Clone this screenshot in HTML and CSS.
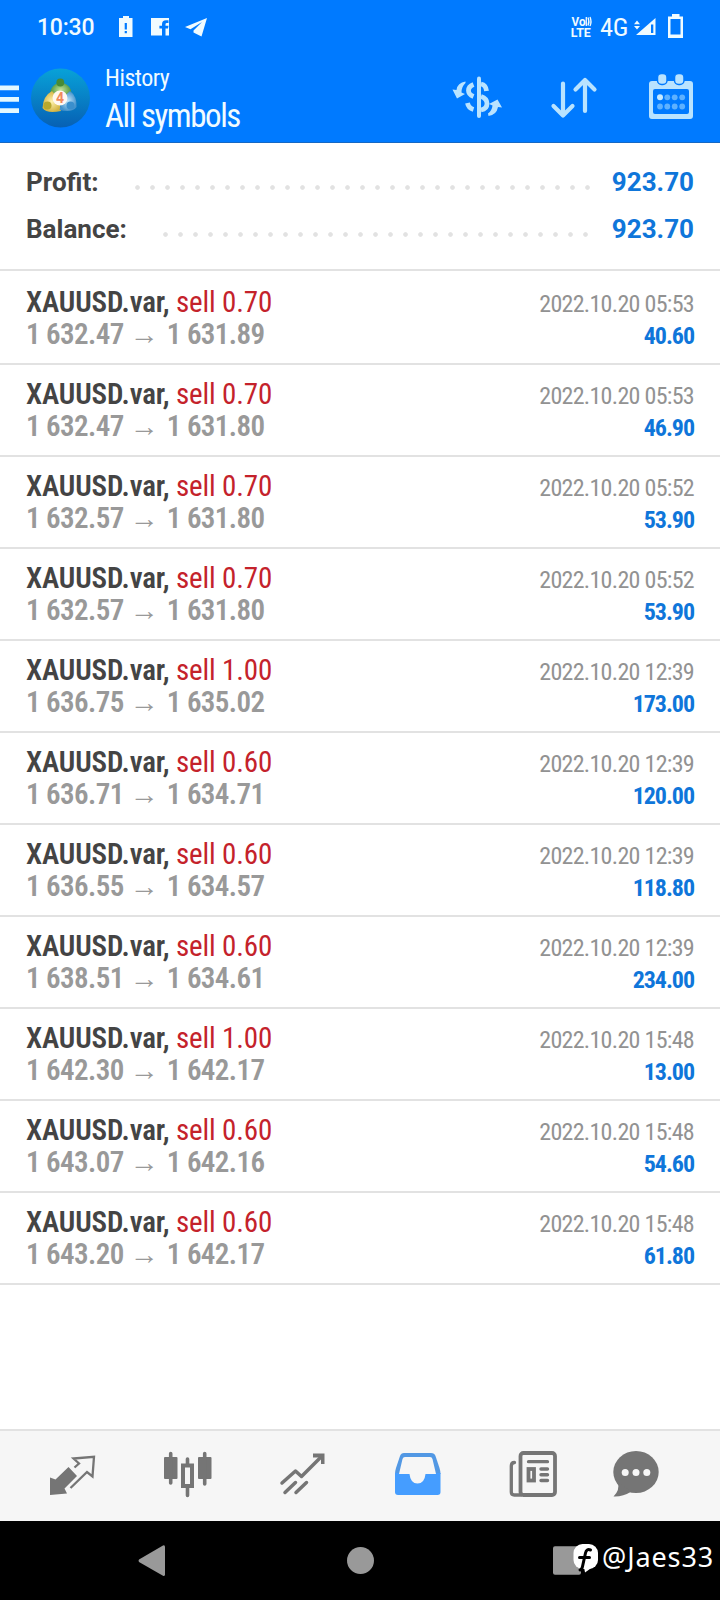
FILE: index.html
```
<!DOCTYPE html>
<html lang="en">
<head>
<meta charset="utf-8">
<title>History</title>
<link rel="stylesheet" href="styles.css">
</head>
<body>
<div class="screen">
  <header class="header">
    <div class="status">
      <span class="clock">10:30</span>
      <svg class="st-left" width="88" height="24" viewBox="119 14 88 24">
        <path fill="#f0fbff" fill-rule="evenodd" d="M123 16h6v2h3.500v19h-13.500v-19h4zM124.700 23v6.500h2.200v-6.500zM124.700 31v2.200h2.200v-2.200z"/>
        <path fill="#f0fbff" d="M151 18h18v17.500h-3.500v-7h2.500l.5-2.800h-3v-1.500q0-1.300 1.400-1.300h1.600v-2.600h-2.500q-4 0-4 4v1.400h-2.600v2.800h2.600v7H151z"/>
        <path fill="#f0fbff" d="M207 18 185 27l5.500 2.200L202 22l-8.500 8.500v2L201.500 36.500z"/>
      </svg>
      <svg class="st-volte" width="26" height="24" viewBox="568 14 26 24" fill="#f0fbff">
        <text class="volte" x="571.500" y="26" textLength="14" lengthAdjust="spacingAndGlyphs">Vo</text>
        <path fill="none" stroke="#f0fbff" stroke-width="1.300" d="M586.300 17v9M588 17.500q1.800 4 0 8M590 17q2 4.500 0 9"/>
        <text class="volte" x="570.800" y="36.800" textLength="20" lengthAdjust="spacingAndGlyphs">LTE</text>
      </svg>
      <span class="net">4G</span>
      <svg class="st-right" width="50" height="26" viewBox="634 13 50 26">
        <path fill="#f0fbff" d="M634 24.200 637 20.500 640 24.200zM634 26 640 26 637 29.500zM655.500 18v17H636z"/>
        <path fill="#007aff" d="M651 24.500h2.300v8.500H651z"/>
        <path fill="#f0fbff" fill-rule="evenodd" d="M672 14h7.500v2.500h3.500V38h-15V16.500h4zM670.500 19v15.500h10V19z"/>
      </svg>
    </div>
    <div class="appbar">
      <svg width="20" height="62" viewBox="0 66 20 62"><path fill="#e3f8ff" d="M0 85.500h19v4.800H0zM0 97h19v4.800H0zM0 108.200h19v4.800H0z"/></svg>
      <svg class="avatar" width="60" height="62" viewBox="30 66 60 62">
        <defs>
          <linearGradient id="sky" x1="0" y1="0" x2="0" y2="1"><stop offset="0" stop-color="#08a2d8"/><stop offset="1" stop-color="#0760b4"/></linearGradient>
          <radialGradient id="gr"><stop offset="0" stop-color="#c5e49a"/><stop offset="1" stop-color="#4f963f"/></radialGradient>
          <radialGradient id="ye"><stop offset="0" stop-color="#fff3b0"/><stop offset="1" stop-color="#d4b544"/></radialGradient>
          <radialGradient id="bl"><stop offset="0" stop-color="#c5e8fb"/><stop offset="1" stop-color="#4492cc"/></radialGradient>
        </defs>
        <circle cx="60.500" cy="98" r="29.500" fill="url(#sky)"/>
        <path fill="url(#gr)" d="M50.500 98q-2-13 10-16 13 3 10.500 16z"/>
        <path fill="url(#ye)" d="M52 91q-9 5-9.500 17 4 6 18.500 3l-2-12z"/>
        <path fill="url(#bl)" d="M70 91q7 5 6.500 16-4 6-17 3l3-12z"/>
        <circle cx="60.300" cy="82.500" r="3.900" fill="#478b35"/>
        <circle cx="47.500" cy="105.500" r="4" fill="#b8a82e"/>
        <circle cx="70.500" cy="105.500" r="4" fill="#3a8fcd"/>
        <circle cx="60" cy="98" r="7.500" fill="#fff8f2"/>
        <text class="four" x="60" y="103" text-anchor="middle">4</text>
      </svg>
      <div class="titles"><div class="t1">History</div><div class="t2">All symbols</div></div>
      <svg class="ic-cur" width="52" height="50" viewBox="452 72 52 50">
        <g fill="none" stroke="#b9e3ff" stroke-width="4.800">
          <path d="M479 78.500v37.500" stroke-width="4" stroke-linecap="round"/>
          <path d="M473.500 84.500q-5 2-5 6 0 4 5 6M467.500 103q1 5 6 6.500M481 84q5 1 5.500 7M481 96.500q6 2 6 7 0 5.500-6 6.500"/>
        </g>
        <path fill="#b9e3ff" d="M465.500 81.500q-8 1-9 8.500l-4-.5 4.500 9 8-4.500-3.500-1.500q0-6 4-9.500zM488.500 116q8-1 9.500-9l4 .5-4.500-8-8.500 4.500 3.500 1.500q-.5 5-4.500 8z"/>
      </svg>
      <svg class="ic-sort" width="48" height="50" viewBox="550 72 48 50">
        <path fill="none" stroke="#b9e3ff" stroke-width="4.200" stroke-linecap="round" stroke-linejoin="round" d="M563 83.500V114M553.500 106l9.500 9.500 9.500-9.500M585 111V82M575.500 89.500l9.500-9.500 9.500 9.500"/>
      </svg>
      <svg class="ic-cal" width="46" height="50" viewBox="648 72 46 50">
        <path fill="#b9e3ff" fill-rule="evenodd" d="M652 81h38q3 0 3 3v32q0 3-3 3h-38q-3 0-3-3V84q0-3 3-3zM655 89q-2 0-2 2v21q0 2 2 2h32q2 0 2-2V91q0-2-2-2z"/>
        <g fill="#b9e3ff" stroke="#007aff" stroke-width="1.500"><rect x="657.500" y="73.500" width="9.500" height="11" rx="4"/><rect x="674.500" y="73.500" width="9.500" height="11" rx="4"/></g>
        <circle cx="660" cy="97.300" r="3" fill="#c8eaff"/>
        <g fill="#5eb1ff"><circle cx="667.300" cy="97.300" r="2.900"/><circle cx="674.700" cy="97.300" r="2.900"/><circle cx="682.200" cy="97.300" r="2.900"/><circle cx="660" cy="106.500" r="2.900"/><circle cx="667.300" cy="106.500" r="2.900"/><circle cx="674.700" cy="106.500" r="2.900"/><circle cx="682.200" cy="106.500" r="2.900"/></g>
      </svg>
    </div>
  </header>
  <section class="summary">
    <div class="sum-row"><span>Profit:</span><i class="dots d1"></i><b>923.70</b></div>
    <div class="sum-row"><span>Balance:</span><i class="dots d2"></i><b>923.70</b></div>
  </section>
  <main class="deals">
    <div class="deal"><div class="info"><div class="sym">XAUUSD.var, <span>sell 0.70</span></div><div class="px">1 632.47 <i>→</i> 1 631.89</div></div><div class="res"><div class="date">2022.10.20 05:53</div><div class="pl">40.60</div></div></div>
    <div class="deal"><div class="info"><div class="sym">XAUUSD.var, <span>sell 0.70</span></div><div class="px">1 632.47 <i>→</i> 1 631.80</div></div><div class="res"><div class="date">2022.10.20 05:53</div><div class="pl">46.90</div></div></div>
    <div class="deal"><div class="info"><div class="sym">XAUUSD.var, <span>sell 0.70</span></div><div class="px">1 632.57 <i>→</i> 1 631.80</div></div><div class="res"><div class="date">2022.10.20 05:52</div><div class="pl">53.90</div></div></div>
    <div class="deal"><div class="info"><div class="sym">XAUUSD.var, <span>sell 0.70</span></div><div class="px">1 632.57 <i>→</i> 1 631.80</div></div><div class="res"><div class="date">2022.10.20 05:52</div><div class="pl">53.90</div></div></div>
    <div class="deal"><div class="info"><div class="sym">XAUUSD.var, <span>sell 1.00</span></div><div class="px">1 636.75 <i>→</i> 1 635.02</div></div><div class="res"><div class="date">2022.10.20 12:39</div><div class="pl">173.00</div></div></div>
    <div class="deal"><div class="info"><div class="sym">XAUUSD.var, <span>sell 0.60</span></div><div class="px">1 636.71 <i>→</i> 1 634.71</div></div><div class="res"><div class="date">2022.10.20 12:39</div><div class="pl">120.00</div></div></div>
    <div class="deal"><div class="info"><div class="sym">XAUUSD.var, <span>sell 0.60</span></div><div class="px">1 636.55 <i>→</i> 1 634.57</div></div><div class="res"><div class="date">2022.10.20 12:39</div><div class="pl">118.80</div></div></div>
    <div class="deal"><div class="info"><div class="sym">XAUUSD.var, <span>sell 0.60</span></div><div class="px">1 638.51 <i>→</i> 1 634.61</div></div><div class="res"><div class="date">2022.10.20 12:39</div><div class="pl">234.00</div></div></div>
    <div class="deal"><div class="info"><div class="sym">XAUUSD.var, <span>sell 1.00</span></div><div class="px">1 642.30 <i>→</i> 1 642.17</div></div><div class="res"><div class="date">2022.10.20 15:48</div><div class="pl">13.00</div></div></div>
    <div class="deal"><div class="info"><div class="sym">XAUUSD.var, <span>sell 0.60</span></div><div class="px">1 643.07 <i>→</i> 1 642.16</div></div><div class="res"><div class="date">2022.10.20 15:48</div><div class="pl">54.60</div></div></div>
    <div class="deal"><div class="info"><div class="sym">XAUUSD.var, <span>sell 0.60</span></div><div class="px">1 643.20 <i>→</i> 1 642.17</div></div><div class="res"><div class="date">2022.10.20 15:48</div><div class="pl">61.80</div></div></div>
  </main>
  <nav class="tabs">
    <svg width="50" height="50" viewBox="47 1449 50 50">
      <path fill="#757575" d="M50 1477.500 55.500 1479.500 68.500 1467 77 1476 64.500 1488.500 67 1493.500 50 1495z"/>
      <path fill="none" stroke="#757575" stroke-width="2.300" d="M74.500 1467.500 79 1463.500 73.500 1458.500 94 1456.800 92.500 1476.500 87 1472 70.500 1488"/>
    </svg>
    <svg width="50" height="50" viewBox="162 1449 50 50">
      <g fill="#757575"><rect x="164" y="1457" width="13.500" height="22" rx="1"/><rect x="198" y="1457" width="13.500" height="22" rx="1"/></g>
      <path fill="none" stroke="#757575" stroke-width="3.600" stroke-linecap="round" d="M170.700 1453.500v29.500M204.700 1453.500v30.500M187.500 1459v5M187.500 1488v7.500"/>
      <rect x="183" y="1465.500" width="9" height="20.500" fill="none" stroke="#757575" stroke-width="4"/>
    </svg>
    <svg width="50" height="50" viewBox="277 1449 50 50">
      <path fill="none" stroke="#757575" stroke-width="3.500" stroke-linecap="round" stroke-linejoin="round" d="M282 1483 295.500 1471 301.500 1476.500 321 1457M285 1492.500 295.500 1482.500M296 1492.500 306.500 1482.500"/>
      <path fill="#757575" d="M313 1453.500h11.500v10.500h-3.500v-6.500h-8z"/>
    </svg>
    <svg width="50" height="50" viewBox="392 1449 50 50">
      <path fill="#5298e4" d="M404 1453h27q3.500 0 4.500 3l4 12q1 3 1 6h-45.500q0-3 1-6l4-12q1-3 4-3z"/>
      <path fill="#459dff" d="M395 1473h45.500v19q0 3-3 3H398q-3 0-3-3z"/>
      <path fill="#f6f6f6" d="M405 1457h25q2 0 2.500 2l3.500 15h-10.500q-1 9.500-8 9.500t-8-9.500H399l3.500-15q.5-2 2.500-2z"/>
    </svg>
    <svg class="news" width="50" height="50" viewBox="508 1449 50 50">
      <g fill="none" stroke="#757575">
        <rect x="520.500" y="1453" width="34.500" height="42" rx="3" stroke-width="3.800"/>
        <path stroke-width="3.300" stroke-linecap="round" d="M514.500 1462.500q-3.200 0-3.200 3.500v26q0 3 3 3h7M528.500 1461.700h19"/>
        <rect x="528.500" y="1469" width="5.500" height="11.500" stroke-width="3.800"/>
        <path stroke-width="3.400" stroke-linecap="round" d="M541 1469h6.500M541 1474.700h6.500M541 1480.500h6.500"/>
      </g>
    </svg>
    <svg class="chat" width="50" height="50" viewBox="611 1449 50 50">
      <ellipse cx="636" cy="1472" rx="22.700" ry="21" fill="#757575"/>
      <path fill="#757575" d="M618 1483q2 7-4.500 13.500 9 .5 18-5z"/>
      <g fill="#f6f6f6"><circle cx="625.200" cy="1472.500" r="3.500"/><circle cx="636" cy="1472.500" r="3.500"/><circle cx="646.800" cy="1472.500" r="3.500"/></g>
    </svg>
  </nav>
  <footer class="sysnav">
    <svg width="28" height="34" viewBox="138 1544 28 34"><path fill="#999" d="M139 1559.500 163 1545.500q2-.8 2 1.500v27.500q0 2-2 1.200L139 1562q-1-1.300 0-2.500z"/></svg>
    <svg class="home" width="28" height="34" viewBox="346 1544 28 34"><circle cx="360.500" cy="1560.500" r="13.500" fill="#999"/></svg>
    <svg class="recent" width="28" height="34" viewBox="553 1544 28 34"><rect x="553" y="1546.300" width="28" height="28.500" rx="2" fill="#999"/></svg>
    <div class="mark">
      <svg width="26" height="30" viewBox="573 1543 26 30">
        <rect x="573.500" y="1544" width="24.500" height="25" rx="9" fill="#fff"/><path fill="#fff" d="M584 1567l1 5.500 7-5z"/>
        <path fill="none" stroke="#000" stroke-width="3" stroke-linecap="round" d="M590.500 1550q-4-1.500-5 3l-3 13.500q-.5 3-2.500 3.500M579.500 1557.500h10"/>
      </svg>
      <span>@Jaes33</span>
    </div>
  </footer>
</div>
</body>
</html>
```
FILE: styles.css
```
* { box-sizing: border-box; }
body { margin: 0; background: #fff; font-family: "Roboto", "Liberation Sans", sans-serif; }
svg { display: block; flex: none; }
i { font-style: normal; }
.screen { width: 720px; height: 1600px; display: flex; flex-direction: column; overflow: hidden; background: #fff; }

.header { height: 143px; background: #007aff; border-bottom: 1px solid #1668c4; color: #f0fbff; }
.status { height: 52px; display: flex; align-items: center; padding-left: 37px; }
.clock { width: 82px; padding-top: 3px; font-size: 23px; font-weight: 500; line-height: 51px; letter-spacing: -0.2px; }
.st-volte { margin-left: 361px; overflow: visible; }
.net { width: 34px; margin-left: 6px; padding-top: 2px; font-family: "Roboto Condensed", "Roboto", sans-serif; font-stretch: condensed; font-size: 26.5px; line-height: 50px; font-weight: 450; letter-spacing: -0.3px; }
.volte { font: bold 12.5px "Roboto", sans-serif; }
.four { font: bold 14px "Roboto", sans-serif; fill: #f08a5c; }
.appbar { display: flex; height: 90px; align-items: center; }
.avatar { margin-left: 10px; }
.titles { width: 347px; padding: 4px 0 0 15px; font-family: "Roboto Condensed", "Roboto", sans-serif; font-stretch: condensed; white-space: nowrap; }
.t1 { font-size: 24px; line-height: 34px; letter-spacing: -0.5px; }
.t2 { font-size: 33px; line-height: 42px; letter-spacing: -1.45px; }
.ic-cur { margin-left: 15px; }
.ic-sort { margin-left: 46px; }
.ic-cal { margin-left: 50px; }

.summary { height: 128px; padding: 16px 26px 0; border-bottom: 2px solid #e2e2e2; }
.sum-row { display: flex; height: 47px; align-items: center; font-size: 26px; line-height: 47px; font-weight: 700; color: #444; }
.sum-row b { width: 83px; text-align: right; color: #0f76da; font-weight: 700; }
.dots { height: 15px; margin-left: auto; margin-top: 10px; background: radial-gradient(circle at center, #e2e2e2 1.9px, transparent 2.7px) 0 0 / 15px 15px; }
.d1 { width: 465px; margin-right: 16px; }
.d2 { width: 435px; margin-right: 18px; }

.deals { flex: 1; font-family: "Roboto Condensed", "Roboto", sans-serif; font-stretch: condensed; }
.deal { display: flex; justify-content: space-between; height: 92px; padding: 13px 26px 0; border-bottom: 2px solid #e2e2e2; white-space: nowrap; }
.deal:first-child { height: 94px; padding-top: 15px; }
.sym, .px { font-size: 29px; line-height: 32px; font-weight: 600; color: #444; }
.sym { letter-spacing: -0.14px; }
.sym span { color: #c4222b; font-weight: 400; }
.px { color: #999; letter-spacing: -0.6px; }
.px i { display: inline-block; width: 31px; font-size: 29px; line-height: 30px; font-weight: 400; }
.res { padding: 2px 0 0; text-align: right; font-size: 24px; line-height: 32px; }
.date { color: #929292; letter-spacing: -0.7px; }
.pl { color: #0f76da; font-weight: 700; letter-spacing: -1.05px; }

.tabs { height: 92px; background: #f6f6f6; border-top: 2px solid #e2e2e2; display: flex; gap: 65px; padding: 18px 0 0 47px; }
.news { margin-left: 1px; }
.chat { margin-left: -12px; }
.sysnav { height: 79px; background: #000; position: relative; display: flex; padding: 23px 0 0 138px; }
.home { margin-left: 180px; }
.recent { margin-left: 179px; }
.mark { position: absolute; left: 573px; top: 22px; display: flex; color: #fff; }
.mark span { margin-left: 3px; font-family: "Noto Sans", "Open Sans", sans-serif; font-size: 27px; line-height: 28px; letter-spacing: 0.9px; white-space: nowrap; }
```
